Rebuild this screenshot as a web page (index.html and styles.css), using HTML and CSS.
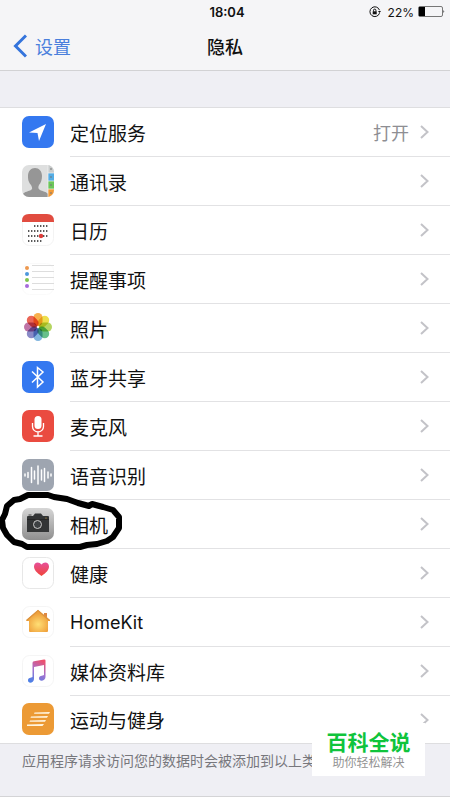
FILE: index.html
```html
<!DOCTYPE html>
<html lang="zh-CN">
<head>
<meta charset="utf-8">
<meta name="viewport" content="width=device-width, initial-scale=1">
<title>隐私</title>
<link rel="stylesheet" href="styles.css">
</head>
<body>
<header class="top">
  <div class="status">
    <span class="time">18:04</span>
    <div class="indicators">
      <svg width="12" height="12" viewBox="0 0 12 12" fill="none" stroke="#111"><path d="M10.500 7.200A4.900 4.900 0 1 1 10.500 4.200"/><path d="M9 5h3l-1.500 2z" fill="#111" stroke="none"/><rect x="3.700" y="5.300" width="4" height="3" fill="#111" stroke="none"/><path d="M4.500 5.500V4.300a1.200 1.200 0 0 1 2.400 0v1.200"/></svg>
      <span class="percent">22%</span>
      <svg width="27" height="12" viewBox="0 0 27 12"><rect x=".5" y=".5" width="24" height="10" rx="1.500" fill="none" stroke="#777"/><rect x="1" y="1" width="6" height="9" fill="#000"/><path d="M25.500 4q1.500 1.500 0 3z" fill="#111"/></svg>
    </div>
  </div>
  <nav class="nav">
    <a class="back" href="#"><svg width="14" height="24" viewBox="0 0 14 24" fill="none" stroke="#3474dc" stroke-width="3"><path d="M13 1.500 2.500 12 13 22.500"/></svg>设置</a>
    <h1>隐私</h1>
  </nav>
</header>
<main>
  <ul class="list">
    <li><a class="row" href="#">
      <svg class="icon" viewBox="0 0 32 32"><rect width="32" height="32" rx="7" fill="#3478f0"/><path d="M24 8 7 16.500l8.500.5 1.500 8z" fill="#fff"/></svg>
      <span class="cell"><span class="label">定位服务</span><span class="value">打开</span><svg class="chevron" viewBox="0 0 9 14"><path d="m1 1 6.500 6L1 13"/></svg></span></a></li>
    <li><a class="row" href="#">
      <svg class="icon" viewBox="0 0 32 32"><defs><clipPath id="book"><rect width="32" height="32" rx="7"/></clipPath></defs><g clip-path="url(#book)"><path fill="#dedfdf" d="M0 0h32v32H0z"/><path fill="#c9cccc" d="M26 0h6v8h-6z"/><path fill="#54ade5" d="M26 8h6v8h-6z"/><path fill="#6cc65a" d="M26 16h6v8h-6z"/><path fill="#f39a36" d="M26 24h6v8h-6z"/><path fill="#969696" d="M1 32v-3c1-2 6-3 8-4 2-1 1-3 0-5-3-3-3-7-3-9 0-5 3-8 7-8s7 3 7 8c0 3-1 7-3 9-1 2-1 4 1 5 2 1 7 2 8 4v3z"/><path d="M26 0v32M26 8h6m-6 8h6m-6 8h6" stroke="#f3f3f3" stroke-width=".7"/><path d="M28 4h2m-2 8h2m-2 8h2m-2 8h2" stroke="#777" stroke-width="1"/></g></svg>
      <span class="cell"><span class="label">通讯录</span><svg class="chevron" viewBox="0 0 9 14"><path d="m1 1 6.500 6L1 13"/></svg></span></a></li>
    <li><a class="row" href="#">
      <svg class="icon" viewBox="0 0 32 32"><rect x=".5" y=".5" width="31" height="31" rx="7" fill="#fff" stroke="#f3f3f3"/><path d="M0 8V7q0-7 7-7h18q7 0 7 7v1z" fill="#e14c40"/><path d="M12 12h14.500M6 17h20.500M6 22h20.500M6 27h14.500" stroke="#222" stroke-width="1.500" stroke-dasharray="1.400 1.600"/><circle cx="19" cy="22" r="2.200" fill="#df3c38"/></svg>
      <span class="cell"><span class="label">日历</span><svg class="chevron" viewBox="0 0 9 14"><path d="m1 1 6.500 6L1 13"/></svg></span></a></li>
    <li><a class="row" href="#">
      <svg class="icon" viewBox="0 0 32 32"><rect x=".5" y=".5" width="31" height="31" rx="7" fill="#fff" stroke="#fafafa"/><path d="M10 2.500h22M10 8.500h22M10 14.500h22M10 20.500h22M10 26.500h22" stroke="#ddd"/><circle cx="5" cy="5" r="2" fill="#ed984f"/><circle cx="5" cy="11" r="2" fill="#4d98dc"/><circle cx="5" cy="17" r="2" fill="#80c64c"/><circle cx="5" cy="23" r="2" fill="#a66bdc"/></svg>
      <span class="cell"><span class="label">提醒事项</span><svg class="chevron" viewBox="0 0 9 14"><path d="m1 1 6.500 6L1 13"/></svg></span></a></li>
    <li><a class="row" href="#">
      <svg class="icon petals" viewBox="0 0 32 32"><rect x="11.500" y="1" width="9" height="13" rx="4.500" fill="#f6a22d"/><rect x="11.500" y="1" width="9" height="13" rx="4.500" fill="#ead82e" transform="rotate(45 16 15)"/><rect x="11.500" y="1" width="9" height="13" rx="4.500" fill="#a8ce45" transform="rotate(90 16 15)"/><rect x="11.500" y="1" width="9" height="13" rx="4.500" fill="#4db577" transform="rotate(135 16 15)"/><rect x="11.500" y="1" width="9" height="13" rx="4.500" fill="#6ba8da" transform="rotate(180 16 15)"/><rect x="11.500" y="1" width="9" height="13" rx="4.500" fill="#7475bd" transform="rotate(225 16 15)"/><rect x="11.500" y="1" width="9" height="13" rx="4.500" fill="#b45c96" transform="rotate(270 16 15)"/><rect x="11.500" y="1" width="9" height="13" rx="4.500" fill="#e74b39" transform="rotate(315 16 15)"/></svg>
      <span class="cell"><span class="label">照片</span><svg class="chevron" viewBox="0 0 9 14"><path d="m1 1 6.500 6L1 13"/></svg></span></a></li>
    <li><a class="row" href="#">
      <svg class="icon" viewBox="0 0 32 32"><rect width="32" height="32" rx="7" fill="#3478f0"/><path d="m10 10.500 11 10.500-5.500 5V6.500L21 11 10 21.500" fill="none" stroke="#fff" stroke-width="1.500"/></svg>
      <span class="cell"><span class="label">蓝牙共享</span><svg class="chevron" viewBox="0 0 9 14"><path d="m1 1 6.500 6L1 13"/></svg></span></a></li>
    <li><a class="row" href="#">
      <svg class="icon" viewBox="0 0 32 32"><rect width="32" height="32" rx="7" fill="#ea4b40"/><rect x="12.500" y="6" width="7" height="13" rx="3.500" fill="#fff"/><path d="M10.500 13v3.500a5.500 5.500 0 0 0 11 0V13M16 22v3.500M11.500 26h9" fill="none" stroke="#fff" stroke-width="1.300"/></svg>
      <span class="cell"><span class="label">麦克风</span><svg class="chevron" viewBox="0 0 9 14"><path d="m1 1 6.500 6L1 13"/></svg></span></a></li>
    <li><a class="row" href="#">
      <svg class="icon" viewBox="0 0 32 32"><rect width="32" height="32" rx="7" fill="#9ea5b0"/><path d="M3 15v2M6 13.500v5M9.500 8.500v15M12.500 12v8M16 7v18M19.500 11v10M22.500 9.500v13M26 13v6M29 15v2" stroke="#fff" stroke-width="1.500" stroke-linecap="round"/></svg>
      <span class="cell"><span class="label">语音识别</span><svg class="chevron" viewBox="0 0 9 14"><path d="m1 1 6.500 6L1 13"/></svg></span></a></li>
    <li class="marked"><a class="row" href="#">
      <svg class="icon" viewBox="0 0 32 32"><defs><linearGradient id="metal" x2="0" y2="1"><stop stop-color="#d6d6d6"/><stop offset="1" stop-color="#8f8f8f"/></linearGradient></defs><rect width="32" height="32" rx="7" fill="url(#metal)"/><path d="M5 24V9q0-1 1-1h5l2-2.500h6L21 8h5q1 0 1 1v15z" fill="#333536"/><path d="M5 11.500h22M6.500 7h3" stroke="#222" stroke-width=".8"/><circle cx="15.500" cy="16.500" r="5.500" fill="#333"/><circle cx="15.500" cy="16.500" r="4" fill="#3e4143" stroke="#ccc"/><circle cx="24" cy="10" r=".6" fill="#d5a63c"/></svg>
      <span class="cell"><span class="label">相机</span><svg class="chevron" viewBox="0 0 9 14"><path d="m1 1 6.500 6L1 13"/></svg></span></a>
      <svg class="scribble" viewBox="0 0 130 64" aria-hidden="true"><path d="M3 37 2 29 5 23 7 15 14 9 20 8 28 4 48 4 54 6 67 8 78 12 89 15 92 13 103 16 113 19 119 26 119 37 113 46 107 50 97 53 87 54 80 56 27 56 22 53 14 51 7 44Z"/></svg></li>
    <li><a class="row" href="#">
      <svg class="icon" viewBox="0 0 32 32"><defs><linearGradient id="heart" x2="0" y2="1"><stop stop-color="#e7509b"/><stop offset="1" stop-color="#f04438"/></linearGradient></defs><rect x=".5" y=".5" width="31" height="31" rx="7" fill="#fff" stroke="#e7e7e7"/><path d="M19.500 19C15 16 12 13 12 9.500 12 5 17 4 19.500 7.500 22 4 27 5 27 9.500c0 3.500-3 6.500-7.500 9.500z" fill="url(#heart)"/></svg>
      <span class="cell"><span class="label">健康</span><svg class="chevron" viewBox="0 0 9 14"><path d="m1 1 6.500 6L1 13"/></svg></span></a></li>
    <li><a class="row" href="#">
      <svg class="icon" viewBox="0 0 32 32"><defs><radialGradient id="home" cy=".65"><stop stop-color="#ffdf75"/><stop offset="1" stop-color="#efa03b"/></radialGradient></defs><rect x=".5" y=".5" width="31" height="31" rx="7" fill="#fff" stroke="#f5f5f5"/><path d="M7 25V15H4.500v-1L16 4l6 5V7h3v4.500l3 2.500v1h-2v10q0 1-1 1H8q-1 0-1-1z" fill="url(#home)"/><path d="m4.500 14.500 11.500-10 11.500 10" fill="none" stroke="#dc933e" stroke-width="1.300"/><path d="M22 9V7h3v4z" fill="#dd8844"/></svg>
      <span class="cell"><span class="label latin" lang="en">HomeKit</span><svg class="chevron" viewBox="0 0 9 14"><path d="m1 1 6.500 6L1 13"/></svg></span></a></li>
    <li><a class="row" href="#">
      <svg class="icon" viewBox="0 0 32 32"><defs><linearGradient id="note" x1=".7" x2=".3" y2="1"><stop stop-color="#ed506e"/><stop offset=".5" stop-color="#a472cf"/><stop offset="1" stop-color="#4d80e6"/></linearGradient></defs><rect x=".5" y=".5" width="31" height="31" rx="7" fill="#fff" stroke="#f5f5f5"/><path d="M10.500 8q0-1.500 1.500-1.700l10-1.800q1.500-.2 1.500 1V22c0 4-6.500 5-6.500 1.500 0-3 3.500-2.500 5-3.500V10l-10 2v12c0 4-6 5-6 1.500 0-3 3-2.500 4.500-3.500z" fill="url(#note)"/></svg>
      <span class="cell"><span class="label">媒体资料库</span><svg class="chevron" viewBox="0 0 9 14"><path d="m1 1 6.500 6L1 13"/></svg></span></a></li>
    <li><a class="row" href="#">
      <svg class="icon" viewBox="0 0 32 32"><rect width="32" height="32" rx="7" fill="#ec9a35"/><path d="M12.500 9.500 28 9l-1 1.800H12zM9 13.500l17-.5-1 1.800H8.500zM8 17.500l16-.5-1 1.800H7.500zM5 21.500l17-.5-1.500 2H5z" fill="#fff5df"/></svg>
      <span class="cell"><span class="label">运动与健身</span><svg class="chevron" viewBox="0 0 9 14"><path d="m1 1 6.500 6L1 13"/></svg></span></a></li>
  </ul>
  <div class="note">
    <p>应用程序请求访问您的数据时会被添加到以上类</p>
    <aside class="stamp"><strong>百科全说</strong><span>助你轻松解决</span></aside>
  </div>
</main>
</body>
</html>
```

FILE: styles.css
```css
* {
  box-sizing: border-box;
}

body {
  margin: 0;
  background: #fff;
  color: #111;
  font-family: Inter, "Noto Sans CJK SC", sans-serif;
}

a {
  color: inherit;
  text-decoration: none;
}

.top {
  background: #f5f5f7;
  border-bottom: 1px solid #d2d2d4;
}

.status {
  display: grid;
  grid-template-columns: 1fr auto 1fr;
  align-items: center;
  height: 24px;
  padding: 0 5px 0 9px;
}

.time {
  grid-column: 2;
  font-size: 13px;
  font-weight: 600;
}

.indicators {
  display: flex;
  align-items: center;
  justify-content: flex-end;
  gap: 4px;
}

.percent {
  margin-left: 3px;
  font-size: 12px;
}

.nav {
  display: grid;
  grid-template-columns: 1fr auto 1fr;
  align-items: center;
  height: 46px;
  padding: 0 13px 2px;
}

.back {
  display: flex;
  align-items: center;
  gap: 8px;
  color: #4a7fdc;
  font-size: 18px;
}

h1 {
  margin: 0;
  font-size: 18px;
  font-weight: 500;
}

main {
  padding-top: 36px;
  background: #efeff4;
}

.list {
  margin: 0;
  padding: 0;
  list-style: none;
  background: #fff;
  border-top: 1px solid #dedee0;
  border-bottom: 1px solid #dedee0;
}

.row {
  display: flex;
  align-items: center;
  gap: 16px;
  padding-left: 22px;
}

.icon {
  width: 32px;
  height: 32px;
  flex: none;
  margin-bottom: 2px;
}

.petals {
  isolation: isolate;
}

.petals rect {
  mix-blend-mode: multiply;
  opacity: 0.85;
}

.cell {
  display: flex;
  flex: 1;
  align-items: center;
  gap: 11px;
  height: 49px;
  padding-right: 21px;
  border-bottom: 1px solid #e2e2e4;
}

li:last-child .cell {
  height: 47px;
  border-bottom: 0;
}

.label {
  flex: 1;
  font-size: 19px;
}

.latin {
  font-size: 18px;
}

.value {
  color: #8e8e93;
  font-size: 18px;
}

.chevron {
  width: 9px;
  height: 14px;
  fill: none;
  stroke: #c3c3c8;
  stroke-width: 2;
}

.marked {
  position: relative;
}

.scribble {
  position: absolute;
  top: -9px;
  left: 0;
  width: 130px;
  height: 64px;
  fill: none;
  stroke: #000;
  stroke-width: 6;
  stroke-linejoin: round;
  stroke-linecap: round;
  z-index: 1;
  pointer-events: none;
}

.note {
  position: relative;
  height: 53px;
  padding: 6px 22px;
  border-bottom: 1px solid #d4d4d6;
}

.note p {
  margin: 0;
  color: #77777c;
  font-size: 14px;
  line-height: 22px;
  white-space: nowrap;
}

.stamp {
  position: absolute;
  top: -21px;
  right: 25px;
  display: flex;
  flex-direction: column;
  align-items: center;
  width: 113px;
  height: 53px;
  padding-top: 8px;
  background: #fff;
}

.stamp strong {
  color: #0fc43c;
  font-size: 21px;
  line-height: 24px;
}

.stamp span {
  color: #929292;
  font-size: 12px;
  line-height: 16px;
}
```
